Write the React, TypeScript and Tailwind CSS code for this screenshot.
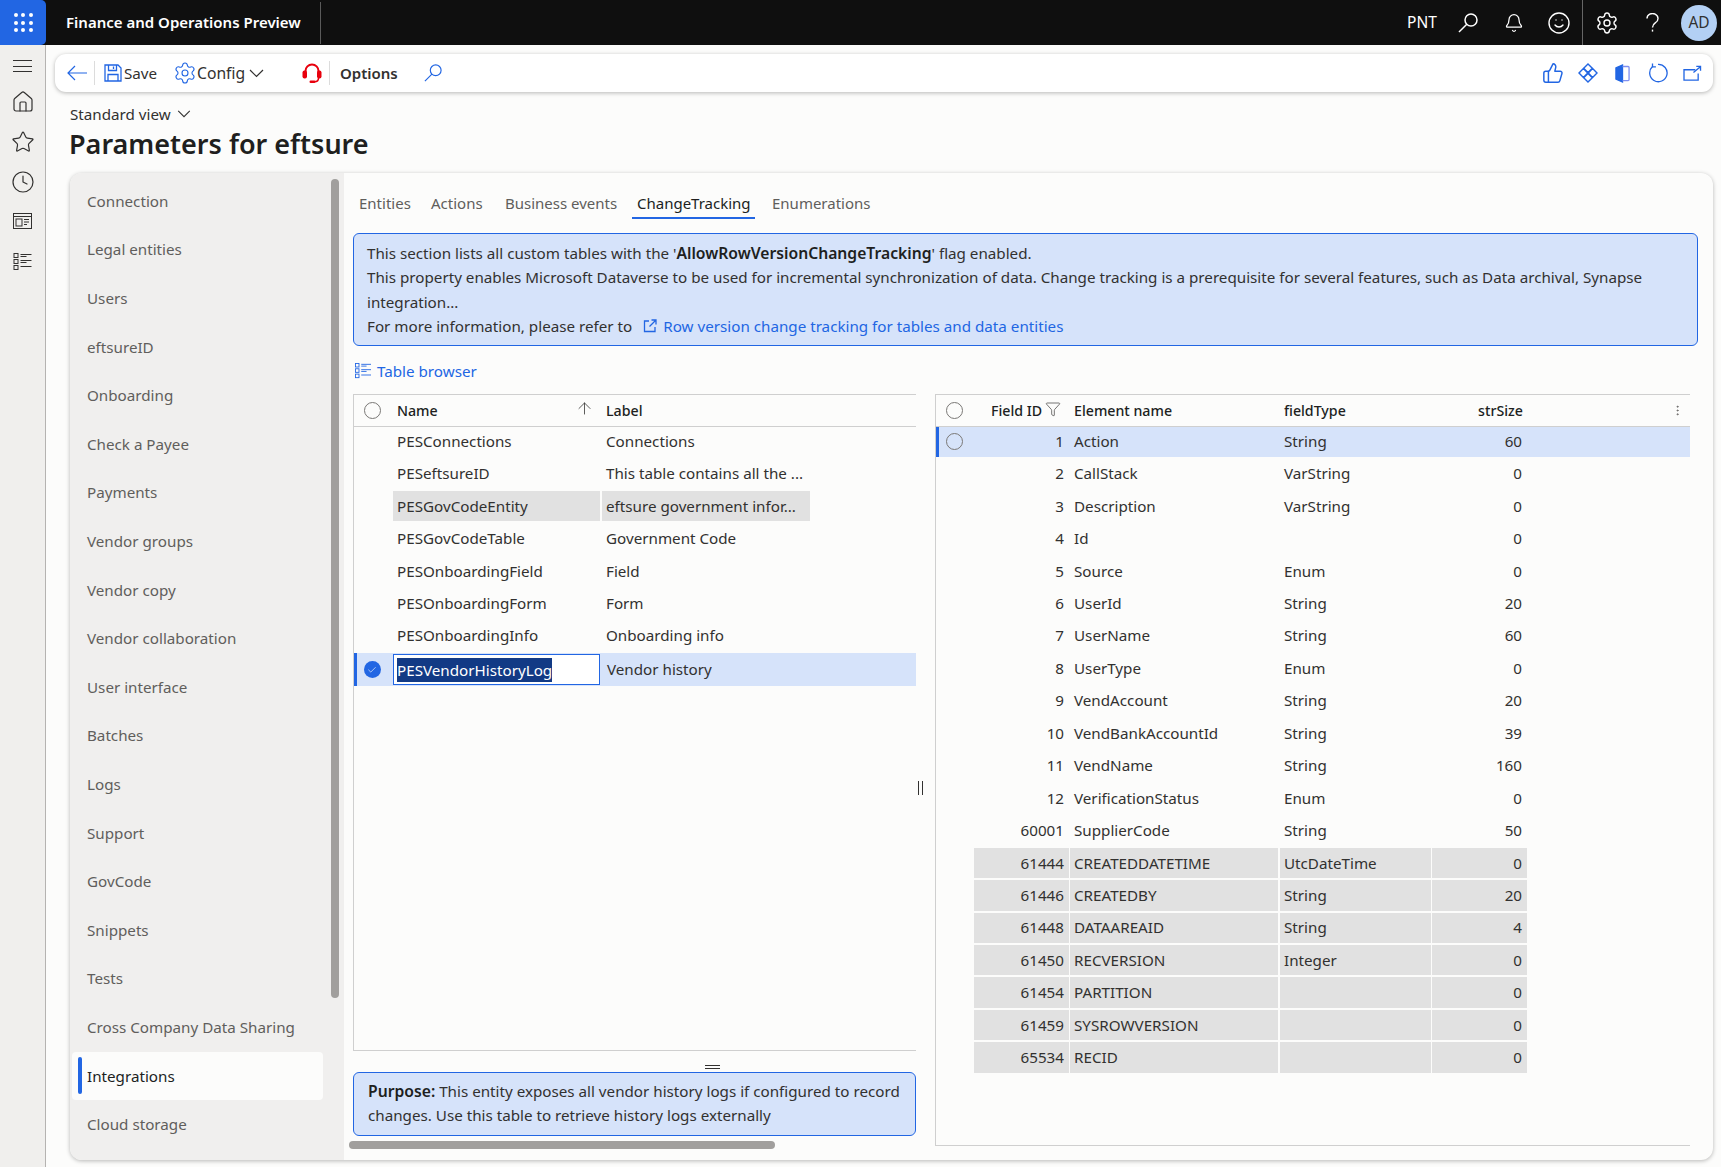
import React from "react";
import { Settings, Bell, Smile, ThumbsUp, Home, Star, Clock, ArrowUp, Filter, Check, EllipsisVertical } from "lucide-react";

const nav = ["Connection","Legal entities","Users","eftsureID","Onboarding","Check a Payee","Payments","Vendor groups","Vendor copy","Vendor collaboration","User interface","Batches","Logs","Support","GovCode","Snippets","Tests","Cross Company Data Sharing","Integrations","Cloud storage"];

const leftRows: [string, string][] = [
  ["PESConnections","Connections"],
  ["PESeftsureID","This table contains all the ..."],
  ["PESGovCodeEntity","eftsure government infor..."],
  ["PESGovCodeTable","Government Code"],
  ["PESOnboardingField","Field"],
  ["PESOnboardingForm","Form"],
  ["PESOnboardingInfo","Onboarding info"],
];

const rightRows: [string, string, string, string][] = [
  ["1","Action","String","60"],["2","CallStack","VarString","0"],["3","Description","VarString","0"],["4","Id","","0"],
  ["5","Source","Enum","0"],["6","UserId","String","20"],["7","UserName","String","60"],["8","UserType","Enum","0"],
  ["9","VendAccount","String","20"],["10","VendBankAccountId","String","39"],["11","VendName","String","160"],["12","VerificationStatus","Enum","0"],
  ["60001","SupplierCode","String","50"],["61444","CREATEDDATETIME","UtcDateTime","0"],["61446","CREATEDBY","String","20"],["61448","DATAAREAID","String","4"],
  ["61450","RECVERSION","Integer","0"],["61454","PARTITION","","0"],["61459","SYSROWVERSION","","0"],["65534","RECID","","0"],
];

function ListIcon({ className }: { className?: string }) {
  return (
    <svg viewBox="0 0 18 18" className={className} fill="none" stroke="currentColor" strokeWidth="1">
      <rect x="0.5" y="0.5" width="4" height="4" /><rect x="0.5" y="6.5" width="4" height="4" /><rect x="0.5" y="12.5" width="4" height="4" />
      <path d="M7 1.5h11M7 3.5h6M7 7.5h11M7 9.5h6M7 13.5h11" />
    </svg>
  );
}

function SearchGlyph({ className, w = 1.3 }: { className?: string; w?: number }) {
  return (
    <svg viewBox="0 0 20 20" className={className} fill="none" stroke="currentColor" strokeWidth={w}>
      <circle cx="13" cy="7" r="6" /><path d="M8.8 11.2L1 19" />
    </svg>
  );
}

function Chevron({ className }: { className?: string }) {
  return (
    <svg viewBox="0 0 15 9" className={className} fill="none" stroke="currentColor" strokeWidth="1.2">
      <path d="M1 1l6.5 6.5L14 1" />
    </svg>
  );
}

function Circle() {
  return <div className="w-[17px] h-[17px] rounded-full border border-[#7a7876]" />;
}

export default function App() {
  return (
    <div className="w-[1721px] h-[1167px] overflow-hidden flex flex-col bg-[#fcfcfb] text-[#323130] text-[15.2px] font-['Noto_Sans',sans-serif]">
      <header className="h-[45px] shrink-0 bg-[#0f0f0f] flex items-center text-white">
        <div className="w-[46px] h-[45px] bg-[#2266e3] rounded-r-[5px] flex items-center justify-center">
          <div className="grid grid-cols-3 gap-[3.5px]">
            {Array.from({ length: 9 }).map((_, i) => <div key={i} className="w-[4px] h-[4px] rounded-full bg-white" />)}
          </div>
        </div>
        <div className="ml-[20px] w-[254px] font-semibold text-[15px] whitespace-nowrap">Finance and Operations Preview</div>
        <div className="w-px h-[42px] bg-[#5a5a5a]" />
        <div className="ml-auto flex items-center">
          <span className="text-[15.5px] w-[37px]">PNT</span>
          <div className="w-[48px] flex justify-center"><SearchGlyph className="w-[20px] h-[20px]" w={1.5} /></div>
          <div className="w-[44px] flex justify-center"><Bell size={20} strokeWidth={1.5} /></div>
          <div className="w-[46px] flex justify-center"><Smile size={24} strokeWidth={1.4} /></div>
          <div className="w-px h-[45px] bg-[#666]" />
          <div className="w-[48px] flex justify-center"><Settings size={24} strokeWidth={1.4} /></div>
          <div className="w-[42px] flex justify-center">
            <svg viewBox="0 0 13 19" className="w-[13px] h-[19px]" fill="none" stroke="currentColor" strokeWidth="1.4">
              <path d="M1 5.5a5.5 5 0 1 1 8.5 4.2C7.6 11 6.5 12 6.5 14.5" /><path d="M6.5 16.6v2" />
            </svg>
          </div>
          <div className="w-[36px] h-[36px] mr-[4px] ml-[8px] rounded-full bg-[#b3d0f4] text-[#323130] flex items-center justify-center text-[15.5px]">AD</div>
        </div>
      </header>

      <div className="flex flex-1 min-h-0">
        <aside className="w-[46px] shrink-0 bg-[#f0efed] border-r border-[#b5b3b1] flex flex-col items-center pt-[15px] text-[#323130]">
          <div className="w-[19px] flex flex-col gap-[4.5px]">
            <div className="h-px bg-[#323130]" /><div className="h-px bg-[#323130]" /><div className="h-px bg-[#323130]" />
          </div>
          <Home size={24} strokeWidth={1.2} className="mt-[18px]" />
          <Star size={24} strokeWidth={1.2} className="mt-[16px]" />
          <Clock size={24} strokeWidth={1.2} className="mt-[16px]" />
          <svg viewBox="0 0 19 16" className="w-[19px] h-[16px] mt-[19px]" fill="none" stroke="#323130" strokeWidth="1">
            <rect x="0.5" y="0.5" width="18" height="15" /><path d="M1 3.5h17" /><rect x="3" y="6" width="6" height="7" /><path d="M11 6.5h5M11 9h5M11 11.5h3" />
          </svg>
          <ListIcon className="w-[19px] h-[18px] mt-[24px]" />
        </aside>

        <main className="flex-1 min-w-0 flex flex-col pl-[9px] pr-[8px]">
          <div className="mt-[9px] h-[38px] shrink-0 bg-white rounded-[11px] shadow-[0_1px_4px_rgba(0,0,0,0.28)] flex items-center text-[#323130]">
            <svg viewBox="0 0 20 16" className="ml-[12px] w-[20px] h-[16px] text-[#2266e3]" fill="none" stroke="currentColor" strokeWidth="1.2">
              <path d="M1 8h19M8 1L1 8l7 7" />
            </svg>
            <div className="w-px h-[24px] bg-[#dcdcdc] ml-[7px]" />
            <svg viewBox="0 0 18 18" className="ml-[9px] w-[18px] h-[18px] text-[#2266e3]" fill="none" stroke="currentColor" strokeWidth="1.3">
              <path d="M1 1h13l3 3v13H1z" /><path d="M4.5 1v5.5h8V1M4 17v-6.5h10V17" /><path d="M9.5 2.5v2.5" />
            </svg>
            <span className="ml-[2px] w-[33px]">Save</span>
            <Settings size={24} strokeWidth={1.1} className="ml-[16px] text-[#2266e3]" />
            <span className="w-[46px] text-[15.7px] pt-[1px]">Config</span>
            <Chevron className="ml-[6px] w-[15px] h-[9px]" />
            <svg viewBox="0 0 20 22" className="ml-[38px] w-[20px] h-[22px]" fill="none">
              <path d="M3.5 11V9a6.5 6.5 0 0 1 13 0v2" stroke="#e8000d" strokeWidth="2" />
              <rect x="0.5" y="8.5" width="4.5" height="8" rx="2" fill="#e8000d" />
              <rect x="15" y="8.5" width="4.5" height="8" rx="2" fill="#e8000d" />
              <path d="M16.5 16c0 3-2 3.8-4 3.8" stroke="#e8000d" strokeWidth="1.5" />
              <rect x="7.5" y="18.5" width="6" height="2.5" rx="1.2" fill="#e8000d" />
            </svg>
            <div className="w-px h-[24px] bg-[#dcdcdc] ml-[7px]" />
            <span className="ml-[10px] w-[58px] font-semibold text-[15px]">Options</span>
            <SearchGlyph className="ml-[26px] w-[18px] h-[18px] text-[#2266e3]" />
            <div className="ml-auto flex items-center text-[#2266e3] mr-[3px]">
              <div className="w-[35px] flex justify-center"><ThumbsUp size={22} strokeWidth={1.6} /></div>
              <div className="w-[35px] flex justify-center">
                <svg viewBox="0 0 20 20" className="w-[20px] h-[20px]" fill="none" stroke="currentColor" strokeWidth="1.4">
                  <path d="M10 1l4.3 4.3L10 9.6 5.7 5.3zM5.4 5.6L9.7 10l-4.3 4.4L1 10zM14.6 5.6L19 10l-4.4 4.4L10.3 10zM10 10.4l4.3 4.3L10 19l-4.3-4.3z" />
                </svg>
              </div>
              <div className="w-[35px] flex justify-center">
                <svg viewBox="0 0 16 20" className="w-[15px] h-[19px]" fill="none" stroke="currentColor" strokeWidth="1.4">
                  <path d="M1 4l7-3v18l-7-3z" fill="currentColor" /><path d="M8 2.5h6a1 1 0 0 1 1 1v13a1 1 0 0 1-1 1H8" stroke="#7f8ff0" />
                </svg>
              </div>
              <div className="w-[35px] flex justify-center">
                <svg viewBox="0 0 20 20" className="w-[20px] h-[20px]" fill="none" stroke="currentColor" strokeWidth="1.3">
                  <path d="M4.5 3.6A8.7 8.7 0 1 0 10 1.3" /><path d="M4.5 0.5v3.4h3.4" />
                </svg>
              </div>
              <div className="w-[35px] flex justify-center">
                <svg viewBox="0 0 20 18" className="w-[19px] h-[17px]" fill="none" stroke="currentColor" strokeWidth="1.4">
                  <path d="M13 5H1v11h15V9" /><path d="M11 8l7-6M14 1.5h4.5V6" />
                </svg>
              </div>
            </div>
          </div>

          <div className="ml-[15px] mt-[12px] h-[20px] flex items-center gap-[6px] shrink-0">
            Standard view <Chevron className="w-[14px] h-[8px]" />
          </div>
          <h1 className="ml-[14px] mt-[2px] h-[36px] text-[27px] leading-[36px] font-semibold text-[#201f1e] shrink-0">Parameters for eftsure</h1>

          <div className="mt-[11px] ml-[15px] h-[987px] flex rounded-[12px] overflow-hidden bg-[#fcfcfb] shadow-[0_1px_4px_rgba(0,0,0,0.28)]">
            <div className="w-[274px] shrink-0 bg-[#f0efee] flex">
              <div className="w-[261px] shrink-0 pt-[4px] pl-[2px]">
                {nav.map((n) => (
                  <div key={n} className={n === "Integrations"
                    ? "h-[48.6px] w-[251px] bg-[#fcfcfb] rounded-[4px] flex items-center text-[#201f1e]"
                    : "h-[48.6px] flex items-center text-[#605e5c]"}>
                    <div className={n === "Integrations" ? "w-[4px] h-[37px] ml-[6px] mr-[5px] rounded-[2px] bg-[#2266e3]" : "w-[4px] ml-[6px] mr-[5px]"} />
                    <span className="whitespace-nowrap">{n}</span>
                  </div>
                ))}
              </div>
              <div className="w-[8px] h-[819px] mt-[6px] bg-[#a19f9d] rounded-[4px]" />
            </div>

            <div className="flex-1 min-w-0 pl-[9px] flex flex-col">
              <div className="h-[46px] shrink-0 flex items-start pt-[19px] text-[#605e5c] text-[15px] pl-[6px]">
                <span className="w-[72px]">Entities</span>
                <span className="w-[74px]">Actions</span>
                <span className="w-[132px]">Business events</span>
                <div className="w-[135px] relative text-[#201f1e]">
                  ChangeTracking
                  <div className="absolute left-[-5px] w-[123px] top-[25px] h-[2px] bg-[#2266e3]" />
                </div>
                <span>Enumerations</span>
              </div>
              <div className="mt-[14px] mr-[15px] h-[113px] shrink-0 bg-[#d6e3fa] border border-[#2266e3] rounded-[6px] pl-[13px] pr-[20px] pt-[7px] leading-[24.3px] text-[#323130]">
                <div>This section lists all custom tables with the '<b className="font-semibold text-[15.7px] text-[#201f1e]">AllowRowVersionChangeTracking</b>' flag enabled.</div>
                <div>This property enables Microsoft Dataverse to be used for incremental synchronization of data. Change tracking is a prerequisite for several features, such as Data archival, Synapse integration...</div>
                <div className="flex items-center">
                  For more information, please refer to
                  <svg viewBox="0 0 14 14" className="w-[14px] h-[14px] ml-[11px] mr-[6px] text-[#2266e3]" fill="none" stroke="currentColor" strokeWidth="1.3">
                    <path d="M6 2H1.5v10.5H12V8M6.5 7.5L12.5 1.5M8.5 1h4.5v4.5" />
                  </svg>
                  <span className="text-[#2266e3]">Row version change tracking for tables and data entities</span>
                </div>
              </div>
              <div className="mt-[15px] h-[20px] shrink-0 flex items-center text-[#2266e3] pl-[2px]">
                <ListIcon className="w-[16px] h-[16px]" />
                <span className="ml-[6px]">Table browser</span>
              </div>

              <div className="mt-[13px] flex flex-1 min-h-0">
                <div className="w-[563px] shrink-0 flex flex-col">
                  <div className="h-[657px] shrink-0 border-l border-t border-b border-[#cfcfcf]">
                    <div className="h-[32px] flex items-center border-b border-[#cfcfcf] text-[#201f1e] text-[14.2px] font-medium">
                      <div className="w-[39px] flex justify-center pr-[3px]"><Circle /></div>
                      <div className="w-[209px] pl-[4px] flex items-center justify-between pr-[8px]">
                        <span>Name</span><ArrowUp size={19} strokeWidth={1} className="text-[#323130] -mt-[3px]" />
                      </div>
                      <div className="pl-[4px]">Label</div>
                    </div>
                    <div className="-mt-[2px]">
                      {leftRows.map(([a, b], i) => {
                        const hi = a === "PESGovCodeEntity";
                        return (
                          <div key={a} className={i === 0 ? "h-[30.45px] mt-[2px] flex items-stretch pb-[2px]" : "h-[32.45px] flex items-stretch py-[1px]"}>
                            <div className="w-[39px]" />
                            <div className={hi ? "w-[207px] pl-[4px] flex items-center bg-[#e1e1e1]" : "w-[207px] pl-[4px] flex items-center"}>{a}</div>
                            <div className={hi ? "w-[208px] ml-[2px] pl-[4px] flex items-center bg-[#e1e1e1]" : "w-[208px] ml-[2px] pl-[4px] flex items-center"}>{b}</div>
                          </div>
                        );
                      })}
                      <div className="h-[33px] mt-[1px] flex items-center bg-[#d6e3fa] border-l-[3px] border-[#2266e3]">
                        <div className="w-[36px] flex justify-center pr-[6px]">
                          <div className="w-[17px] h-[17px] rounded-full bg-[#2266e3] flex items-center justify-center"><Check size={10} strokeWidth={1.5} className="text-white" /></div>
                        </div>
                        <div className="w-[207px] h-[31px] bg-white border border-[#2266e3] flex items-center pl-[3px]">
                          <span className="bg-[#123a85] text-white h-[24px] leading-[24px]">PESVendorHistoryLog</span>
                        </div>
                        <div className="pl-[7px]">Vendor history</div>
                      </div>
                    </div>
                  </div>
                  <div className="h-[21px] shrink-0 flex justify-center pl-[155px] pt-[14px]">
                    <div className="w-[15px] h-[4px] border-t border-b border-[#323130]" />
                  </div>
                  <div className="h-[64px] shrink-0 bg-[#d6e3fa] border border-[#2266e3] rounded-[6px] pl-[14px] pt-[6px] leading-[24px]">
                    <b className="font-semibold text-[15.7px] text-[#201f1e]">Purpose:</b> This entity exposes all vendor history logs if configured to record changes. Use this table to retrieve history logs externally
                  </div>
                  <div className="w-[426px] h-[8px] -ml-[4px] mt-[5px] bg-[#a19f9d] rounded-[4px] shrink-0" />
                </div>

                <div className="w-[19px] shrink-0 flex justify-start pl-[2px] pt-[387px]">
                  <div className="w-[5px] h-[14px] border-l border-r border-[#323130]" />
                </div>

                <div className="w-[755px] h-[752px] border-l border-t border-b border-[#cfcfcf] shrink-0">
                  <div className="h-[32px] flex items-center border-b border-[#cfcfcf] text-[#201f1e] text-[14.2px] font-medium">
                    <div className="w-[38px] flex justify-center pr-[2px]"><Circle /></div>
                    <div className="w-[96px] pl-[17px] flex items-center whitespace-nowrap">Field ID<Filter size={16} strokeWidth={1} className="ml-[3px] -mt-[3px] text-[#323130]" /></div>
                    <div className="w-[210px] pl-[4px]">Element name</div>
                    <div className="w-[152px] pl-[4px]">fieldType</div>
                    <div className="w-[95px] text-right pr-[4px]">strSize</div>
                    <div className="flex-1 flex justify-end pr-[6px]"><EllipsisVertical size={13} strokeWidth={1.5} className="text-[#605e5c]" /></div>
                  </div>
                  <div className="-mt-[2px]">
                    {rightRows.map(([id, name, type, size], i) => {
                      const sel = i === 0;
                      const shade = i >= 13;
                      const cell = shade ? "bg-[#e1e1e1]" : "";
                      return (
                        <div key={id} className={sel ? "h-[30.45px] mt-[2px] flex items-stretch pb-[2px] bg-[#d6e3fa] border-l-[3px] border-[#2266e3]" : "h-[32.45px] flex items-stretch py-[1px]"}>
                          <div className={sel ? "w-[35px] flex items-center justify-center pr-[5px]" : "w-[38px]"}>{sel && <Circle />}</div>
                          <div className={`w-[95px] flex items-center justify-end pr-[5px] ${cell}`}>{id}</div>
                          <div className={`w-[208px] ml-[1px] pl-[4px] flex items-center ${cell}`}>{name}</div>
                          <div className={`w-[151px] ml-[2px] pl-[4px] flex items-center ${cell}`}>{type}</div>
                          <div className={`w-[95px] ml-[1px] pr-[5px] flex items-center justify-end ${cell}`}>{size}</div>
                        </div>
                      );
                    })}
                  </div>
                </div>
              </div>
            </div>
          </div>
        </main>
      </div>
    </div>
  );
}
